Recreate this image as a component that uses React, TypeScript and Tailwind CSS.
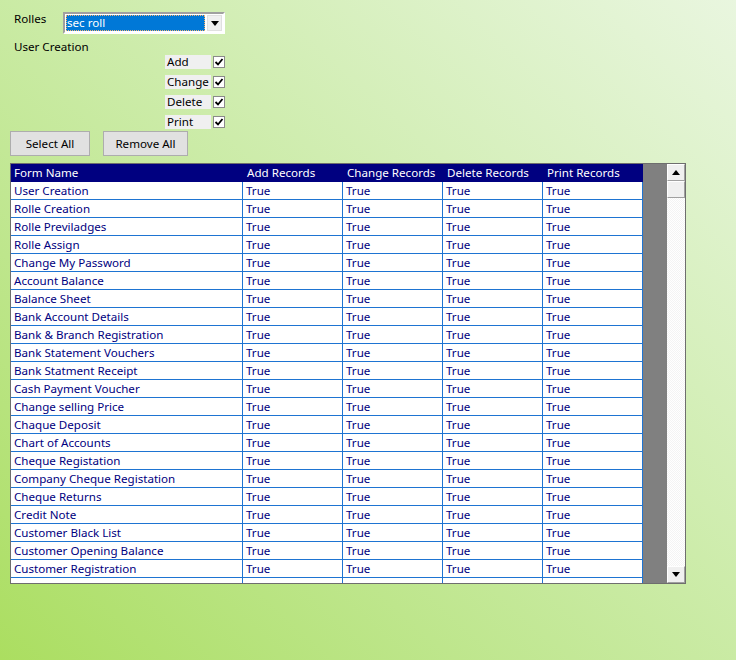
// Role privileges form — recreated as a static screen

const FORMS = [
  'User Creation',
  'Rolle Creation',
  'Rolle Previladges',
  'Rolle Assign',
  'Change My Password',
  'Account Balance',
  'Balance Sheet',
  'Bank Account Details',
  'Bank & Branch Registration',
  'Bank Statement Vouchers',
  'Bank Statment Receipt',
  'Cash Payment Voucher',
  'Change selling Price',
  'Chaque Deposit',
  'Chart of Accounts',
  'Cheque Registation',
  'Company Cheque Registation',
  'Cheque Returns',
  'Credit Note',
  'Customer Black List',
  'Customer Opening Balance',
  'Customer Registration',
  'Customer Receipt Voucher Details',
];

const PERMS = ['Add', 'Change', 'Delete', 'Print'];

function CheckMark() {
  return (
    <svg width="10" height="10" viewBox="0 0 10 10">
      <path d="M1.5 5 L4 7.5 L8.5 2" fill="none" stroke="#000" strokeWidth="1.8" />
    </svg>
  );
}

function Arrow({ up }: { up?: boolean }) {
  return (
    <svg width="8" height="5" viewBox="0 0 8 5">
      <path d={up ? 'M0 5 L4 0 L8 5 Z' : 'M0 0 L8 0 L4 5 Z'} fill="#000" />
    </svg>
  );
}

export default function App() {
  return (
    <div
      className="w-[736px] h-[660px] overflow-hidden bg-gradient-to-tr from-[#abde60] to-[#e9f6df] text-[11.6px] text-black"
      style={{ fontFamily: '"Noto Sans", "Segoe UI", sans-serif' }}
    >
      {/* Rolles combo */}
      <div className="flex items-start pt-[12px] pl-[14px] h-[34px]">
        <span className="w-[49px] leading-[14px]">Rolles</span>
        <div className="w-[162px] h-[22px] border-2 border-t-[#a0a0a0] border-l-[#a0a0a0] border-b-white border-r-white bg-white flex items-center p-px">
          <div className="flex-1 h-[16px] bg-[#0078d7] border border-dotted border-[#f6b26b] text-white leading-[14px]">
            sec roll
          </div>
          <div className="w-[15px] h-[16px] ml-[2px] bg-[#f0f0f0] border border-[#e0e0e0] flex items-center justify-center">
            <Arrow />
          </div>
        </div>
      </div>

      <div className="pl-[14px] pt-[6px] leading-[14px]">User Creation</div>

      {/* permission checkboxes */}
      <div className="flex flex-col gap-[6px] pl-[165px] pt-[1px]">
        {PERMS.map((p) => (
          <div key={p} className="flex items-center h-[14px]">
            <span className="w-[46px] h-[14px] bg-[#f0f0f0] leading-[14px] pl-[2px]">{p}</span>
            <span className="ml-[2px] w-[12px] h-[12px] bg-white border border-[#8a8a8a] flex items-center justify-center">
              <CheckMark />
            </span>
          </div>
        ))}
      </div>

      {/* buttons */}
      <div className="flex gap-[13px] pl-[10px] pt-[2px]">
        <button className="w-[80px] h-[25px] bg-[#e1e1e1] border border-[#adadad] text-[11.6px] leading-none">
          Select All
        </button>
        <button className="w-[85px] h-[25px] bg-[#e1e1e1] border border-[#adadad] text-[11.6px] leading-none">
          Remove All
        </button>
      </div>

      {/* grid */}
      <div className="ml-[10px] mt-[7px] w-[676px] h-[421px] border border-[#6e6e6e] bg-[#808080] flex overflow-hidden">
        <div className="w-[632px] flex flex-col overflow-hidden">
          <div className="flex h-[18px] shrink-0 bg-[#000080] text-white leading-[18px]">
            <div className="w-[232px] pl-[3px]">Form Name</div>
            <div className="w-[100px] pl-[4px]">Add Records</div>
            <div className="w-[100px] pl-[4px]">Change Records</div>
            <div className="w-[100px] pl-[4px]">Delete Records</div>
            <div className="w-[100px] pl-[4px]">Print Records</div>
          </div>
          {FORMS.map((f) => (
            <div
              key={f}
              className="flex h-[18px] shrink-0 bg-white border-b border-[#1e74d2] text-[#000080] leading-[17px]"
            >
              <div className="w-[232px] pl-[3px] border-r border-[#1e74d2] whitespace-nowrap">{f}</div>
              <div className="w-[100px] pl-[3px] border-r border-[#1e74d2]">True</div>
              <div className="w-[100px] pl-[3px] border-r border-[#1e74d2]">True</div>
              <div className="w-[100px] pl-[3px] border-r border-[#1e74d2]">True</div>
              <div className="w-[100px] pl-[3px] border-r border-[#1e74d2]">True</div>
            </div>
          ))}
        </div>
        <div className="w-[24px] bg-[#808080]" />
        {/* scrollbar */}
        <div className="w-[18px] flex flex-col bg-[repeating-conic-gradient(#f4f4f4_0%_25%,#ffffff_0%_50%)] bg-[length:2px_2px]">
          <div className="h-[17px] bg-[#f0f0f0] border border-t-white border-l-white border-b-[#a0a0a0] border-r-[#a0a0a0] flex items-center justify-center">
            <Arrow up />
          </div>
          <div className="h-[17px] bg-[#f0f0f0] border border-t-white border-l-white border-b-[#a0a0a0] border-r-[#a0a0a0]" />
          <div className="flex-1" />
          <div className="h-[17px] bg-[#f0f0f0] border border-t-white border-l-white border-b-[#a0a0a0] border-r-[#a0a0a0] flex items-center justify-center">
            <Arrow />
          </div>
        </div>
      </div>
    </div>
  );
}
